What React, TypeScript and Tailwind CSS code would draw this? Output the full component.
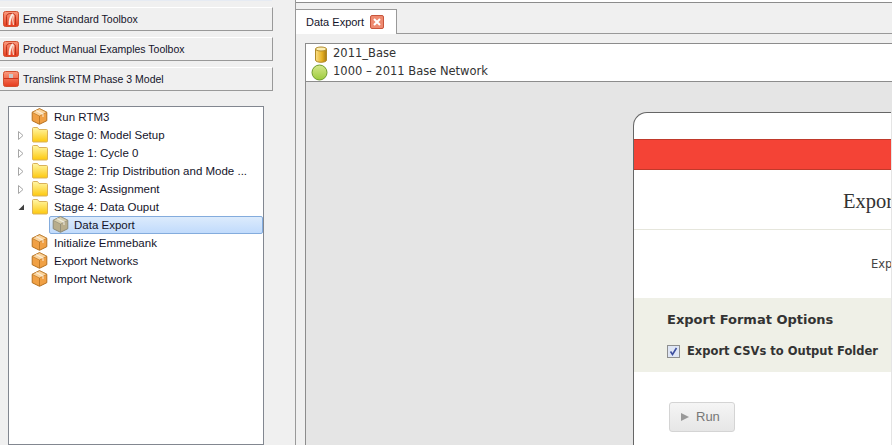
const uiFont = "font-['Liberation_Sans',sans-serif]";

function ToolboxIcon({ plain }: { plain?: boolean }) {
  return (
    <svg width="16" height="16" viewBox="0 0 16 16" className="shrink-0">
      <defs>
        <linearGradient id="tb" x1="0" y1="0" x2="0" y2="1">
          <stop offset="0" stopColor="#fb9c80" />
          <stop offset="1" stopColor="#e63a1c" />
        </linearGradient>
      </defs>
      <rect x="0.5" y="0.5" width="15" height="15" rx="2" fill="url(#tb)" stroke="#d0502f" />
      {plain ? (
        <>
          <rect x="1" y="7" width="14" height="1" fill="#c9341c" />
          <rect x="6" y="3" width="4" height="4" fill="#c8c8c8" />
        </>
      ) : (
        <>
          <path d="M3.5 14V5.5C3.5 3.500 5 2.500 8 2.500S12.500 3.500 12.500 5.500V14" stroke="#b9331a" strokeWidth="1" fill="none" />
          <path d="M6.500 14C6.500 9 7.500 5.500 10 3" stroke="#f8ece4" strokeWidth="2" fill="none" />
          <path d="M10.500 14C9.500 10 9.500 7 10.500 4" stroke="#f6d8c8" strokeWidth="1.200" fill="none" />
        </>
      )}
    </svg>
  );
}

function BoxIcon({ muted }: { muted?: boolean }) {
  const light = muted ? "#d8cfae" : "#fbd49c";
  const mid = muted ? "#b8ad8c" : "#f0a044";
  const dark = muted ? "#8d8a78" : "#b5701f";
  return (
    <svg width="17" height="17" viewBox="0 0 17 17" className="-mt-[1px] shrink-0">
      <path d="M8.500 .7 15.800 4.300V12.700L8.500 16.300 1.200 12.700V4.300Z" fill={mid} stroke={dark} strokeLinejoin="round" />
      <path d="M8.500 .7 15.800 4.300 8.500 8 1.200 4.300Z" fill={light} stroke={dark} strokeWidth="0.600" />
      <path d="M8.500 8V16" stroke={dark} strokeWidth="0.800" />
      <path d="M5 2.500 12 6.200V9" stroke="#fff" strokeOpacity="0.600" strokeWidth="1.300" fill="none" />
    </svg>
  );
}

function FolderIcon() {
  return (
    <svg width="16" height="16" viewBox="0 0 16 16" className="shrink-0">
      <defs>
        <linearGradient id="fd" x1="0" y1="0" x2="0" y2="1">
          <stop offset="0" stopColor="#fff7a8" />
          <stop offset="1" stopColor="#fdc80c" />
        </linearGradient>
      </defs>
      <path d="M.5 14V1.500a1 1 0 0 1 1-1h4l1.500 2h7.500a1 1 0 0 1 1 1V14a1 1 0 0 1-1 1h-13.500a1 1 0 0 1-.500-1Z" fill="url(#fd)" stroke="#d9b15a" />
    </svg>
  );
}

function Arrow({ open }: { open?: boolean }) {
  return (
    <svg width="8" height="9" viewBox="0 0 8 9" className="shrink-0">
      {open ? <path d="M7 1.500V7H1.500Z" fill="#404040" /> : <path d="M1.500 .5 6 4.500 1.500 8.500Z" fill="#fff" stroke="#a6a6a6" />}
    </svg>
  );
}

type TreeRow = { label: string; kind: "box" | "folder"; arrow?: "closed" | "open" };

const rows: TreeRow[] = [
  { label: "Run RTM3", kind: "box" },
  { label: "Stage 0: Model Setup", kind: "folder", arrow: "closed" },
  { label: "Stage 1: Cycle 0", kind: "folder", arrow: "closed" },
  { label: "Stage 2: Trip Distribution and Mode ...", kind: "folder", arrow: "closed" },
  { label: "Stage 3: Assignment", kind: "folder", arrow: "closed" },
  { label: "Stage 4: Data Ouput", kind: "folder", arrow: "open" },
];

const rowsAfter = ["Initialize Emmebank", "Export Networks", "Import Network"];

function Row({ row }: { row: TreeRow }) {
  return (
    <div className="flex h-[18px] items-center">
      <div className={`flex shrink-0 justify-center ${row.kind === "box" ? "w-[22px]" : "w-[23px]"}`}>{row.arrow && <Arrow open={row.arrow === "open"} />}</div>
      {row.kind === "box" ? <BoxIcon /> : <FolderIcon />}
      <span className="ml-[6px] whitespace-nowrap pt-[1px]">{row.label}</span>
    </div>
  );
}

function ToolboxButton({ label, plain }: { label: string; plain?: boolean }) {
  return (
    <div className="flex h-[24px] w-[273px] items-center gap-[4px] border-r border-b border-t border-r-[#999] border-b-[#999] border-t-white bg-[#f0f0f0] pl-[3px] text-[10.5px]">
      <ToolboxIcon plain={plain} />
      <span className="whitespace-nowrap pt-[1px]">{label}</span>
    </div>
  );
}

export default function App() {
  return (
    <div className={`flex h-[445px] w-[892px] overflow-hidden bg-[#f0f0f0] text-[11.5px] text-[#14142a] ${uiFont}`}>
      {/* Toolboxes and tree */}
      <div className="flex w-[295px] shrink-0 flex-col">
        <div className="h-[1px] w-[272px] bg-[#e6ebf3]" />
        <div className="mt-[6px] flex flex-col gap-[6px]">
          <ToolboxButton label="Emme Standard Toolbox" />
          <ToolboxButton label="Product Manual Examples Toolbox" />
          <ToolboxButton label="Translink RTM Phase 3 Model" plain />
        </div>
        <div className="ml-[8px] mt-[15px] w-[256px] flex-1 border border-[#828790] bg-white pt-[1px]">
          {rows.map((r) => (
            <Row key={r.label} row={r} />
          ))}
          <div className="ml-[40px] flex h-[18px] w-[214px] items-center gap-[5px] rounded-[2px] border border-[#84acdd] bg-gradient-to-b from-[#dcebfc] to-[#c1dbfc] pl-[2px]">
            <BoxIcon muted />
            <span className="pt-[1px]">Data Export</span>
          </div>
          {rowsAfter.map((label) => (
            <Row key={label} row={{ label, kind: "box" }} />
          ))}
        </div>
      </div>

      {/* Editor area */}
      <div className="flex min-w-0 flex-1 flex-col border-l border-[#999]">
        <div className="h-[3px] border-b border-[#8c8c8c] bg-white" />
        <div className="mt-[6px] flex h-[25px] items-stretch border-b border-[#999]">
          <div className="-mb-[1px] flex w-[101px] items-center gap-[6px] border-r border-t border-[#999] bg-white pl-[10px] text-[11px]">
            <span className="whitespace-nowrap">Data Export</span>
            <span className="flex h-[14px] w-[14px] items-center justify-center rounded-[2px] border border-[#c8553c] bg-[#ee8a70]">
              <svg width="8" height="8" viewBox="0 0 8 8">
                <path d="M1 1 7 7M7 1 1 7" stroke="#fff" strokeWidth="2" />
              </svg>
            </span>
          </div>
        </div>
        <div className="ml-[9px] mt-[9px] flex min-h-0 flex-1 flex-col overflow-hidden border-l border-t border-[#8c8c8c]">
          <div className="h-[38px] shrink-0 border-b border-[#8c8c8c] bg-white pl-[7px] pt-[1px] font-['DejaVu_Sans',sans-serif] text-[11.5px] text-[#333]">
            <div className="flex h-[18px] items-center gap-[5px]">
              <svg width="14" height="17" viewBox="0 0 14 17" className="ml-[1px] shrink-0">
                <defs>
                  <linearGradient id="cy" x1="0" y1="0" x2="1" y2="0">
                    <stop offset="0" stopColor="#fbe08a" />
                    <stop offset="0.6" stopColor="#e6b020" />
                    <stop offset="1" stopColor="#a87a10" />
                  </linearGradient>
                </defs>
                <path d="M1.500 3v11c0 3 11 3 11 0V3Z" fill="url(#cy)" stroke="#b08a28" />
                <ellipse cx="7" cy="3" rx="5.500" ry="2" fill="#fdf0b8" stroke="#b08a28" />
              </svg>
              <span>2011_Base</span>
            </div>
            <div className="-ml-[2px] flex h-[18px] items-center gap-[5px]">
              <svg width="17" height="17" viewBox="0 0 17 17" className="shrink-0">
                <defs>
                  <linearGradient id="gr" x1="0" y1="0" x2="0" y2="1">
                    <stop offset="0" stopColor="#d6e88c" />
                    <stop offset="1" stopColor="#9ccb3c" />
                  </linearGradient>
                </defs>
                <circle cx="8.500" cy="8.500" r="7.500" fill="url(#gr)" stroke="#6f9c2c" />
              </svg>
              <span>1000 – 2011 Base Network</span>
            </div>
          </div>
          <div className="flex-1 bg-[#e5e5e5] pl-[327px] pt-[30px]">
            <div className="h-[400px] w-[258px] overflow-hidden rounded-tl-[14px] border-l border-t border-[#666] bg-white">
              <div className="mt-[26px] h-[31px] border-y border-[#c0392b] bg-[#f44336]" />
              <div className="flex h-[60px] items-center border-b border-[#e6e6dc] pl-[209px] pt-[3px] font-['Liberation_Serif',serif] text-[20.5px] text-[#333]">
                Expor
              </div>
              <div className="flex h-[68px] items-center pl-[237px] pt-[1px] font-['DejaVu_Sans',sans-serif] text-[11.5px] text-[#444]">
                Exp
              </div>
              <div className="h-[74px] bg-[#eff0e7] pl-[33px] pt-[13px] font-['DejaVu_Sans',sans-serif] text-[13px] font-bold text-[#333]">
                <div className="leading-[18px]">Export Format Options</div>
                <div className="mt-[13px] flex items-center gap-[7px] leading-[18px]">
                  <span className="flex h-[13px] w-[13px] items-center justify-center border border-[#8e8f8f] bg-[#dfe6f5]">
                    <svg width="9" height="9" viewBox="0 0 9 9">
                      <path d="M1.500 4.500 3.500 7.500 7.500 1" stroke="#3d4f9f" strokeWidth="1.600" fill="none" />
                    </svg>
                  </span>
                  <span className="whitespace-nowrap text-[11.5px]">Export CSVs to Output Folder</span>
                </div>
              </div>
              <div className="pl-[35px] pt-[30px]">
                <div className={`flex h-[30px] w-[66px] items-center gap-[7px] rounded-[3px] border border-[#d4d4d4] bg-gradient-to-b from-[#f5f5f5] to-[#e6e6e6] pl-[11px] text-[13px] text-[#777] ${uiFont}`}>
                  <svg width="8" height="8" viewBox="0 0 8 8">
                    <path d="M0 0 8 4 0 8Z" fill="#999" />
                  </svg>
                  <span>Run</span>
                </div>
              </div>
            </div>
          </div>
        </div>
      </div>
    </div>
  );
}
